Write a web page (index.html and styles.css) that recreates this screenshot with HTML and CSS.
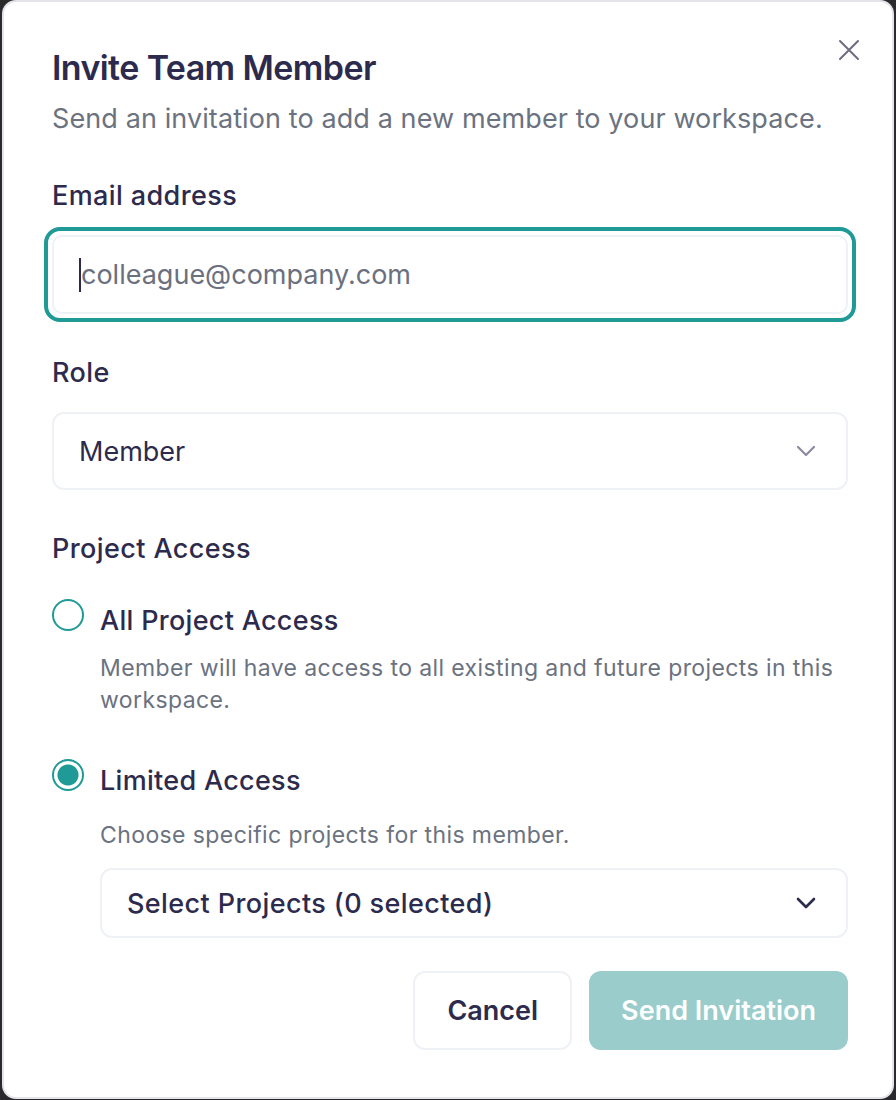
FILE: index.html
```html
<!DOCTYPE html>
<html lang="en">
  <head>
    <meta charset="UTF-8" />
    <meta name="viewport" content="width=device-width, initial-scale=1.0" />
    <title>Invite Team Member</title>
    <link rel="stylesheet" href="styles.css">
  </head>
  <body>
    <div class="modal">
      <button class="close-btn" aria-label="Close">
        <svg width="26" height="26" viewBox="0 0 26 26" fill="none" stroke="currentColor" stroke-width="2" stroke-linecap="round">
          <path d="M4 4L22 22M22 4L4 22" />
        </svg>
      </button>

      <h1 class="title">Invite Team Member</h1>
      <p class="subtitle">Send an invitation to add a new member to your workspace.</p>

      <div class="field">
        <label class="label" for="email">Email address</label>
        <div class="input-ring">
          <div class="input-box">
            <span class="caret"></span>
            <span class="placeholder">colleague@company.com</span>
          </div>
        </div>
      </div>

      <div class="field">
        <label class="label">Role</label>
        <div class="select">
          <span>Member</span>
          <svg class="chevron light" width="20" height="12" viewBox="0 0 20 12" fill="none" stroke="currentColor" stroke-width="2.2" stroke-linecap="round" stroke-linejoin="round">
            <path d="M2 2L10 10L18 2" />
          </svg>
        </div>
      </div>

      <div class="field access">
        <label class="label">Project Access</label>

        <div class="option">
          <span class="radio"></span>
          <div class="option-body">
            <div class="option-title">All Project Access</div>
            <div class="option-desc">Member will have access to all existing and future projects in this workspace.</div>
          </div>
        </div>

        <div class="option">
          <span class="radio checked"></span>
          <div class="option-body">
            <div class="option-title">Limited Access</div>
            <div class="option-desc wide">Choose specific projects for this member.</div>
            <div class="select projects">
              <span>Select Projects (0 selected)</span>
              <svg class="chevron" width="20" height="12" viewBox="0 0 20 12" fill="none" stroke="currentColor" stroke-width="2.6" stroke-linecap="round" stroke-linejoin="round">
                <path d="M2 2L10 10L18 2" />
              </svg>
            </div>
          </div>
        </div>
      </div>

      <div class="actions">
        <button class="btn btn-cancel">Cancel</button>
        <button class="btn btn-send" disabled>Send Invitation</button>
      </div>
    </div>
  </body>
</html>
```

FILE: styles.css
```css
html,
body {
  margin: 0;
  height: 100%;
}
body {
  background: #2a2a2c;
  font-family: Inter, "Noto Sans", sans-serif;
  color: #2d2b4d;
}
.modal {
  position: relative;
  box-sizing: border-box;
  margin: 0 2px;
  height: 1099px;
  background: #fff;
  border: 2px solid #e4e5ea;
  border-radius: 14px;
  padding: 44px 44px 0 48px;
}
.close-btn {
  position: absolute;
  top: 35px;
  right: 30px;
  padding: 0;
  border: 0;
  background: none;
  color: #6e6d80;
  cursor: pointer;
}
.close-btn svg {
  display: block;
}
.title {
  margin: 0;
  font-size: 34px;
  font-weight: 600;
  letter-spacing: -0.6px;
  line-height: 44px;
}
.subtitle {
  margin: 12px 0 0;
  font-size: 27px;
  line-height: 34px;
  letter-spacing: 0.1px;
  color: #6b7280;
}
.field {
  margin-top: 42px;
}
.access {
  margin-top: 41px;
}
.label {
  display: block;
  font-size: 27px;
  font-weight: 500;
  letter-spacing: 0.4px;
  line-height: 36px;
}
.input-ring {
  margin: 13px -8px -9px;
  padding: 4px;
  border: 4px solid #1f9a97;
  border-radius: 16px;
}
.input-box {
  box-sizing: border-box;
  display: flex;
  align-items: center;
  height: 79px;
  padding: 0 25px;
  border: 2px solid #eef1f5;
  border-radius: 10px;
}
.caret {
  width: 2px;
  height: 34px;
  background: #2d2b4d;
}
.placeholder {
  font-size: 27px;
  color: #6b7080;
}
.select {
  box-sizing: border-box;
  display: flex;
  align-items: center;
  justify-content: space-between;
  height: 78px;
  margin-top: 21px;
  padding: 0 30px 0 25px;
  border: 2px solid #eef1f5;
  border-radius: 12px;
  font-size: 27px;
}
.chevron {
  color: #2d2b4d;
}
.chevron.light {
  color: #8c8ba0;
}
.option {
  display: flex;
  gap: 16px;
  margin-top: 36px;
}
.option + .option {
  margin-top: 47px;
}
.radio {
  flex: none;
  box-sizing: border-box;
  width: 32px;
  height: 32px;
  margin-top: -4px;
  border: 2px solid #1f9a97;
  border-radius: 50%;
}
.radio.checked {
  background: radial-gradient(circle, #1f9a97 0 10px, #fff 11px);
}
.option-body {
  flex: 1;
}
.option-title {
  font-size: 27px;
  font-weight: 500;
  letter-spacing: 0.3px;
  line-height: 36px;
}
.option-desc {
  margin-top: 13px;
  font-size: 23px;
  letter-spacing: 0.4px;
  line-height: 32px;
  color: #6b7280;
}
.option-desc.wide {
  margin-top: 20px;
}
.select.projects {
  height: 70px;
  margin-top: 17px;
  font-weight: 500;
  letter-spacing: 0.4px;
}
.actions {
  display: flex;
  justify-content: flex-end;
  gap: 17px;
  margin-top: 33px;
}
.btn {
  box-sizing: border-box;
  height: 79px;
  padding: 0 32px;
  border-radius: 12px;
  font-family: inherit;
  font-size: 27px;
  font-weight: 600;
  cursor: pointer;
}
.btn-cancel {
  background: #fff;
  border: 2px solid #eef1f5;
  color: #2d2b4d;
}
.btn-send {
  background: #99cccb;
  border: 0;
  color: #fff;
}
```
